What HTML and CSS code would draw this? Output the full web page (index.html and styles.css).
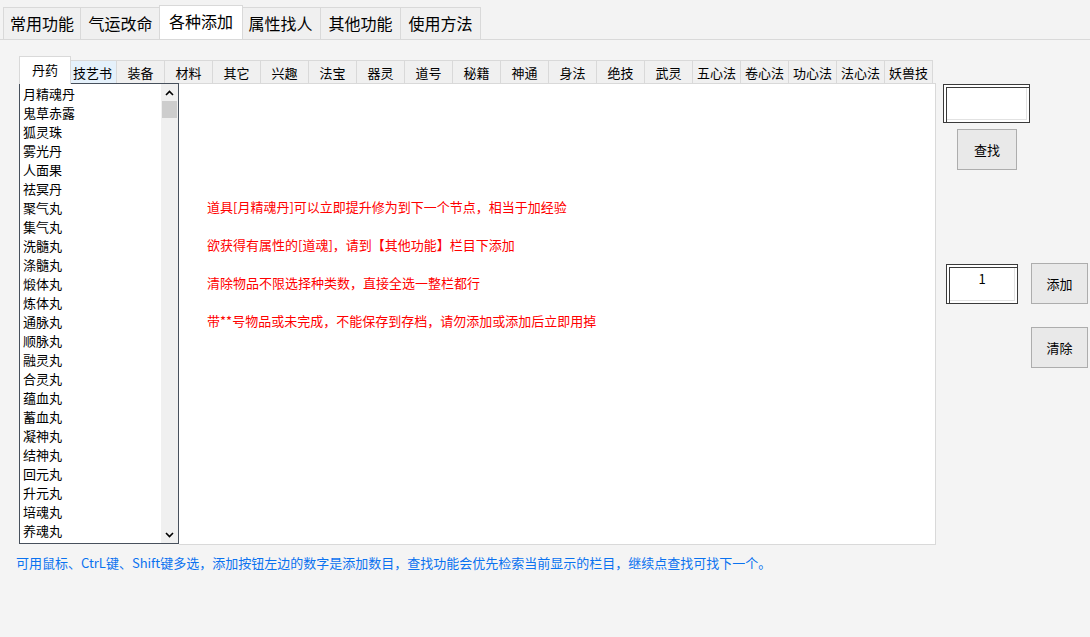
FILE: index.html
```html
<!DOCTYPE html>
<html lang="zh">
<head>
<meta charset="utf-8">
<title>各种添加</title>
<link rel="stylesheet" href="styles.css">
</head>
<body>
<div class="app">
  <div class="tabs">
    <div class="tab first">常用功能</div>
    <div class="tab">气运改命</div>
    <div class="tab active">各种添加</div>
    <div class="tab">属性找人</div>
    <div class="tab">其他功能</div>
    <div class="tab">使用方法</div>
  </div>
  <div class="page">
    <div class="subtabs">
      <div class="stab active">丹药</div>
      <div class="stab hover">技艺书</div>
      <div class="stab">装备</div>
      <div class="stab">材料</div>
      <div class="stab">其它</div>
      <div class="stab">兴趣</div>
      <div class="stab">法宝</div>
      <div class="stab">器灵</div>
      <div class="stab">道号</div>
      <div class="stab">秘籍</div>
      <div class="stab">神通</div>
      <div class="stab">身法</div>
      <div class="stab">绝技</div>
      <div class="stab">武灵</div>
      <div class="stab">五心法</div>
      <div class="stab">卷心法</div>
      <div class="stab">功心法</div>
      <div class="stab">法心法</div>
      <div class="stab">妖兽技</div>
    </div>
    <div class="main">
      <div class="panel">
        <div class="list">
          <ul class="items">
            <li>月精魂丹</li><li>鬼草赤露</li><li>狐灵珠</li><li>雾光丹</li>
            <li>人面果</li><li>祛冥丹</li><li>聚气丸</li><li>集气丸</li>
            <li>洗髓丸</li><li>涤髓丸</li><li>煅体丸</li><li>炼体丸</li>
            <li>通脉丸</li><li>顺脉丸</li><li>融灵丸</li><li>合灵丸</li>
            <li>蕴血丸</li><li>蓄血丸</li><li>凝神丸</li><li>结神丸</li>
            <li>回元丸</li><li>升元丸</li><li>培魂丸</li><li>养魂丸</li>
          </ul>
          <div class="scrollbar">
            <div class="sb-btn"><svg width="9" height="6" viewBox="0 0 9 6"><path d="M1 5 L4.5 1.5 L8 5" fill="none" stroke="#000" stroke-width="1.6"/></svg></div>
            <div class="sb-thumb"></div>
            <div class="sb-track"></div>
            <div class="sb-btn"><svg width="9" height="6" viewBox="0 0 9 6"><path d="M1 1 L4.5 4.5 L8 1" fill="none" stroke="#000" stroke-width="1.6"/></svg></div>
          </div>
        </div>
        <div class="info">
          <p>道具[月精魂丹]可以立即提升修为到下一个节点，相当于加经验</p>
          <p>欲获得有属性的[道魂]，请到【其他功能】栏目下添加</p>
          <p>清除物品不限选择种类数，直接全选一整栏都行</p>
          <p>带**号物品或未完成，不能保存到存档，请勿添加或添加后立即用掉</p>
        </div>
      </div>
      <div class="side">
        <div class="field search-field"></div>
        <div class="btn search-btn">查找</div>
        <div class="add-row">
          <div class="field count-field">1</div>
          <div class="btn">添加</div>
        </div>
        <div class="btn clear-btn">清除</div>
      </div>
    </div>
    <p class="hint">可用鼠标、CtrL键、Shift键多选，添加按钮左边的数字是添加数目，查找功能会优先检索当前显示的栏目，继续点查找可找下一个。</p>
  </div>
</div>
</body>
</html>
```
FILE: styles.css
```css
* { box-sizing: border-box; }
html, body { margin: 0; padding: 0; }
body {
  background: #f4f4f4;
  font-family: "Noto Sans CJK SC", "Microsoft YaHei", "Noto Sans", sans-serif;
  color: #000;
  width: 1090px;
  height: 637px;
  overflow: hidden;
}
.app { width: 1090px; height: 637px; }

.tabs {
  display: flex;
  align-items: flex-end;
  height: 39px;
  padding-left: 3px;
  background: #f3f3f3;
}
.tab {
  height: 32px;
  width: 80px;
  border-top: 1px solid #d9d9d9;
  border-right: 1px solid #d9d9d9;
  background: #f0f0f0;
  font-size: 16px;
  line-height: 31px;
  text-align: center;
  white-space: nowrap;
}
.tab.first { border-left: 1px solid #d9d9d9; width: 78px; }
.tab.active {
  position: relative;
  z-index: 1;
  height: 34px;
  width: 84px;
  margin: 0 -2px;
  background: #fff;
  border-left: 1px solid #d9d9d9;
  line-height: 31px;
}

.page {
  border-top: 1px solid #d9d9d9;
  padding-top: 16px;
}

.subtabs {
  display: flex;
  align-items: flex-end;
  height: 28px;
  padding-left: 21px;
}
.stab {
  width: 48px;
  height: 24px;
  border-top: 1px solid #d9d9d9;
  border-right: 1px solid #d9d9d9;
  background: #f0f0f0;
  font-size: 13px;
  line-height: 23px;
  text-align: center;
  white-space: nowrap;
}
.stab.hover { background: #e5f1fb; }
.stab.active {
  position: relative;
  z-index: 2;
  width: 52px;
  height: 28px;
  margin: 0 -2px 0 -2px;
  background: #fff;
  border-left: 1px solid #d9d9d9;
  line-height: 26px;
}

.main {
  display: flex;
  align-items: flex-start;
  margin-top: -1px;
}
.panel {
  display: flex;
  margin-left: 19px;
  width: 917px;
  height: 462px;
}
.list {
  display: flex;
  width: 160px;
  height: 461px;
  border: 1px solid #47505c;
  background: #fff;
}
.items {
  list-style: none;
  margin: 0;
  padding: 0;
  flex: 1;
  font-size: 13px;
  line-height: 19px;
}
.items li { padding-left: 3px; height: 19px; white-space: nowrap; }
.scrollbar {
  width: 17px;
  display: flex;
  flex-direction: column;
  background: #f0f0f0;
}
.sb-btn {
  height: 17px;
  display: flex;
  align-items: center;
  justify-content: center;
}
.sb-thumb { height: 17px; background: #cdcdcd; margin: 0 1px; }
.sb-track { flex: 1; }

.info {
  flex: 1;
  height: 462px;
  background: #fff;
  border: 1px solid #d9d9d9;
  border-left: none;
  padding: 113px 0 0 28px;
  color: #ff0000;
  font-size: 13px;
  line-height: 19px;
}
.info p { margin: 0 0 19px 0; white-space: nowrap; }

.side {
  display: flex;
  flex-direction: column;
  align-items: flex-start;
  padding-left: 7px;
  padding-top: 1px;
}
.field {
  background: #fff;
  border: 1px solid #3a3a3a;
  box-shadow: inset 2px 2px 0 #fff, inset 3px 3px 0 #3a3a3a, inset -2px -2px 0 #fff, inset -3px -3px 0 #e2e2e2;
  font-size: 13px;
}
.search-field { width: 87px; height: 39px; }
.btn {
  background: #e9e9e9;
  border: 1px solid #adadad;
  font-size: 13px;
  display: flex;
  align-items: center;
  justify-content: center;
}
.search-btn { width: 60px; height: 41px; margin: 6px 0 0 14px; }
.add-row {
  display: flex;
  align-items: flex-start;
  margin: 93px 0 0 3px;
}
.count-field {
  width: 72px;
  height: 40px;
  margin-top: 1px;
  text-align: center;
  padding-top: 6px;
  line-height: 16px;
}
.add-row .btn { width: 57px; height: 41px; margin-left: 13px; }
.clear-btn { width: 57px; height: 41px; margin: 23px 0 0 88px; }

.hint {
  margin: 8px 0 0 16px;
  color: #0a72f0;
  font-size: 13px;
  line-height: 19px;
  white-space: nowrap;
}
```
